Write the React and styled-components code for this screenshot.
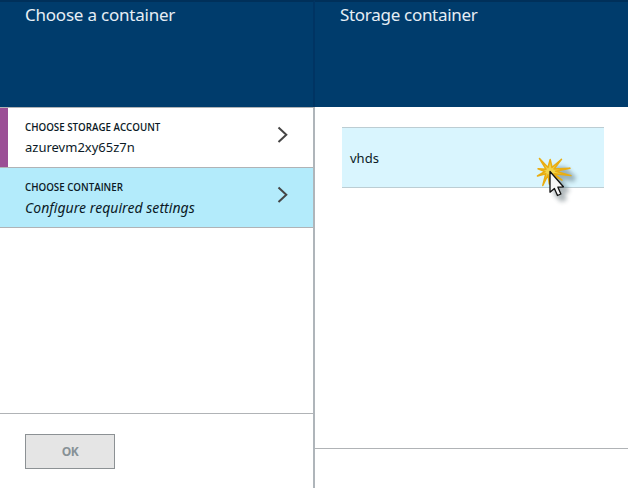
import React from "react";
import styled, { createGlobalStyle } from "styled-components";

const GlobalStyle = createGlobalStyle`
  *, *::before, *::after { box-sizing: border-box; }
  body { margin: 0; background: #fff; overflow: hidden; }
`;

const Page = styled.main`
  display: grid;
  grid-template-columns: 315px 1fr;
  width: 628px;
  height: 488px;
  overflow: hidden;
  color: #0b1a26;
  font-family: "Noto Sans", "Open Sans", sans-serif;
`;

const Blade = styled.section`
  display: flex;
  flex-direction: column;
  min-width: 0;
`;

const Header = styled.header`
  height: 107px;
  padding: 3px 25px 0;
  background: #003c6c;
  border-top: 2px solid #00305a;
  border-right: ${(p) => (p.$divided ? "2px solid #003463" : "0")};
`;

const Title = styled.h1`
  margin: 0;
  color: #e6eef5;
  font-size: 17px;
  font-weight: 400;
  line-height: 20px;
  letter-spacing: ${(p) => p.$tracking};
  white-space: nowrap;
`;

const StepsBody = styled.div`
  flex: 1;
  display: flex;
  flex-direction: column;
  border-right: 2px solid #afb5ba;
  border-top: 1px solid #b0b3b6;
`;

const Step = styled.div`
  display: flex;
  align-items: flex-start;
  justify-content: space-between;
  height: 60px;
  padding: 12px 24px 0 25px;
  background: ${(p) => (p.$active ? "#b3ebfb" : "#fff")};
  border-bottom: 1px solid #b0b3b6;
  box-shadow: ${(p) => (p.$done ? "inset 8px 0 #9b4f96" : "none")};
`;

const StepLabel = styled.div`
  font-family: "Open Sans", sans-serif;
  font-size: 9.75px;
  font-weight: 600;
  line-height: 15px;
  white-space: nowrap;
`;

const StepValue = styled.div`
  margin-top: ${(p) => (p.$pending ? "3px" : "2px")};
  font-size: ${(p) => (p.$pending ? "14px" : "13px")};
  font-style: ${(p) => (p.$pending ? "italic" : "normal")};
  line-height: 20px;
  letter-spacing: ${(p) => (p.$pending ? "0.04px" : "0")};
  white-space: nowrap;
`;

const Chevron = styled.svg`
  width: 12px;
  height: 18px;
  margin-top: 6px;
  fill: none;
  stroke: #454545;
  stroke-width: 2;
`;

const Footer = styled.footer`
  margin-top: auto;
  height: ${(p) => p.$height}px;
  padding: 20px 25px 0;
  border-top: 1px solid #b0b3b6;
`;

const OkButton = styled.button`
  display: block;
  width: 90px;
  height: 35px;
  padding: 0;
  background: #e5e5e5;
  border: 1px solid #8c9194;
  border-radius: 0;
  color: #879196;
  font: 700 12px/33px "Open Sans", sans-serif;
  letter-spacing: -0.4px;
`;

const ListBody = styled.div`
  flex: 1;
  display: flex;
  flex-direction: column;
  padding-top: 20px;
`;

const ContainerItem = styled.div`
  position: relative;
  width: 262px;
  height: 61px;
  margin-left: 27px;
  padding-left: 8px;
  background: #d9f5fe;
  border-top: 1px solid #bccdd3;
  border-bottom: 1px solid #bccdd3;
  font-size: 13px;
  line-height: 61px;
`;

const ClickPointer = styled.svg`
  position: absolute;
  left: 188px;
  top: 22px;
  width: 50px;
  height: 56px;
  overflow: visible;
`;

function Arrow() {
  return (
    <Chevron viewBox="0 0 12 18" aria-hidden="true">
      <path d="M1.5 1.5 L9.3 8.8 L1.5 16" />
    </Chevron>
  );
}

function Pointer() {
  return (
    <ClickPointer viewBox="530 150 50 56" aria-hidden="true">
      <defs>
        <filter id="soft" x="-50%" y="-50%" width="200%" height="200%">
          <feGaussianBlur stdDeviation="2" />
        </filter>
      </defs>
      <path
        d="M551 166 L566 167 L576 177 L574 182 L562 180 L570 191 L565 194 L567 200 L561 202 L554 195 Z"
        fill="#29404a"
        opacity="0.36"
        filter="url(#soft)"
      />
      <path
        d="M539.5 158.5 L548 167.5 L550.2 159.5 L552 167.5 L561.5 159.3 L554 169 L570 168.3 L555.5 171.3 L571 175.6 L554 173.8 L562 180 L551 174.5 L549.3 184 L548 174.8 L542.8 185.5 L545.8 173.8 L537.5 176 L545 171.5 L538 168.7 L546 169.2 Z"
        fill="#f0d44c"
        stroke="#e9ad12"
        strokeWidth="1.5"
        strokeLinejoin="round"
      />
      <path
        d="M550 171.5 L550 192.2 L554.4 188.4 L557.5 195.5 L560.9 194 L557.9 187.2 L563.4 186.8 Z"
        fill="#f7f7f7"
        stroke="#111"
        strokeWidth="1.3"
        strokeLinejoin="round"
      />
    </ClickPointer>
  );
}

export default function App() {
  return (
    <>
      <GlobalStyle />
      <Page>
        <Blade>
          <Header $divided>
            <Title $tracking="-0.22px">Choose a container</Title>
          </Header>
          <StepsBody>
            <Step $done>
              <div>
                <StepLabel>CHOOSE STORAGE ACCOUNT</StepLabel>
                <StepValue>azurevm2xy65z7n</StepValue>
              </div>
              <Arrow />
            </Step>
            <Step $active>
              <div>
                <StepLabel>CHOOSE CONTAINER</StepLabel>
                <StepValue $pending>Configure required settings</StepValue>
              </div>
              <Arrow />
            </Step>
            <Footer $height={75}>
              <OkButton disabled>OK</OkButton>
            </Footer>
          </StepsBody>
        </Blade>
        <Blade>
          <Header>
            <Title $tracking="-0.3px">Storage container</Title>
          </Header>
          <ListBody>
            <ContainerItem>
              vhds
              <Pointer />
            </ContainerItem>
            <Footer $height={40} />
          </ListBody>
        </Blade>
      </Page>
    </>
  );
}
